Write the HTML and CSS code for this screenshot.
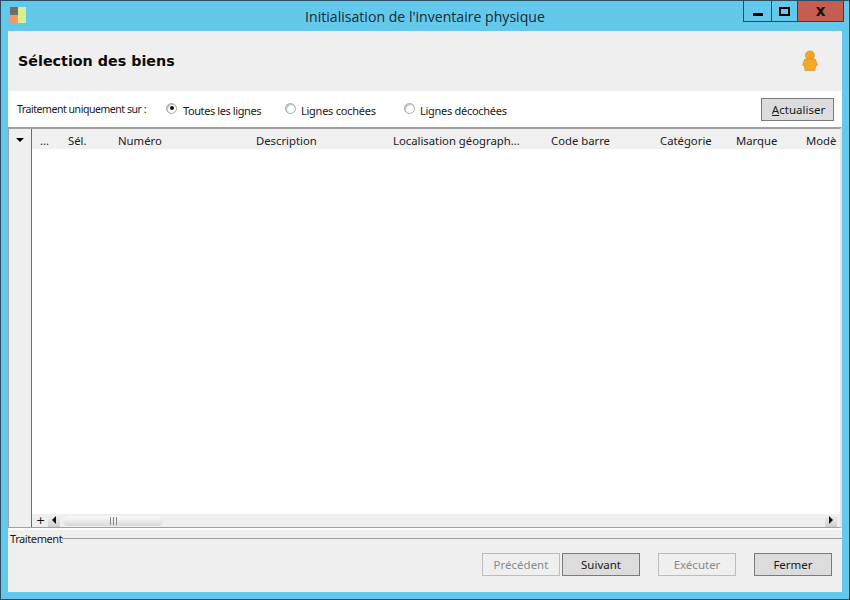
FILE: index.html
```html
<!DOCTYPE html>
<html lang="fr">
<head>
<meta charset="utf-8">
<title>Initialisation de l'inventaire physique</title>
<link rel="stylesheet" href="styles.css">
</head>
<body>
<div class="window">
  <div class="titlebar">
    <div class="app-icon"><svg width="18" height="16" viewBox="0 0 18 16"><rect x="0" y="0" width="8" height="8" fill="#6e6e6e"/><rect x="0" y="8" width="8" height="8" fill="#f59a62"/><rect x="8" y="0" width="8" height="16" fill="#d6f08e"/></svg></div>
    <div class="title">Initialisation de l'inventaire physique</div>
    <div class="win-buttons">
      <div class="wb wb-min"><span class="min-glyph"></span></div>
      <div class="wb wb-max"><span class="max-glyph"></span></div>
      <div class="wb wb-close">x</div>
    </div>
  </div>
  <div class="client">
    <header class="head">
      <h1>Sélection des biens</h1>
      <svg class="person" width="18" height="22" viewBox="0 0 18 22"><circle cx="9" cy="5.500" r="4.600" fill="#f5a623" stroke="#c98a20" stroke-width=".6"/><path d="M3.500 9.500Q9 7.500 14.500 9.500L16.500 15 14.500 16 14 20.500H4L3.500 16 1.500 15z" fill="#f9a825" stroke="#c98a20" stroke-width=".6" stroke-linejoin="round"/></svg>
    </header>
    <div class="filter">
      <span class="filter-label">Traitement uniquement sur :</span>
      <label class="radio r1"><span class="dot on"></span>Toutes les lignes</label>
      <label class="radio r2"><span class="dot"></span>Lignes cochées</label>
      <label class="radio r3"><span class="dot"></span>Lignes décochées</label>
      <button class="btn refresh"><u>A</u>ctualiser</button>
    </div>
    <section class="grid">
      <div class="rail"><span class="rail-arrow"></span></div>
      <div class="main">
        <div class="cols">
          <span class="c-a">...</span><span class="c-b">Sél.</span><span class="c-c">Numéro</span><span class="c-d">Description</span><span class="c-e">Localisation géograph...</span><span class="c-f">Code barre</span><span class="c-g">Catégorie</span><span class="c-h">Marque</span><span class="c-i">Modèle</span>
        </div>
        <div class="rows"></div>
        <div class="footer">
          <span class="plus">+</span>
          <div class="scroll">
            <span class="arrow left"></span>
            <span class="thumb"><span class="grip"></span></span>
            <span class="arrow right"></span>
          </div>
        </div>
      </div>
    </section>
    <section class="group">
      <div class="legend"><span>Traitement</span><i></i></div>
      <div class="actions">
        <button class="btn" disabled>Précédent</button>
        <button class="btn next">Suivant</button>
        <button class="btn exec" disabled>Exécuter</button>
        <button class="btn close">Fermer</button>
      </div>
    </section>
  </div>
</div>
</body>
</html>
```
FILE: styles.css
```css
* { box-sizing: border-box; }
html, body { margin: 0; padding: 0; }
body { width: 850px; height: 600px; overflow: hidden; font-family: "Noto Sans", "Open Sans", sans-serif; font-size: 11.5px; color: #1a1a1a; }
.window { width: 850px; height: 600px; background: #63c9ec; border: 1px solid #2a4f63; display: flex; flex-direction: column; padding: 0 7px 7px; }
.titlebar { height: 30px; flex: none; display: grid; grid-template-columns: 1fr auto 1fr; margin: 0 -7px; }
.app-icon { padding: 6px 0 0 9px; }
.app-icon svg { display: block; }
.title { font-family: "Open Sans", "Noto Sans", sans-serif; font-size: 14.100px; line-height: 31px; color: #1a2a33; }
.win-buttons { display: flex; justify-content: flex-end; align-items: flex-start; padding-right: 5px; }
.wb { height: 21px; border: 1px solid #24465a; border-top: 0; display: flex; align-items: center; justify-content: center; margin-left: -1px; }
.wb-min { width: 29px; }
.wb-max { width: 27px; }
.wb-close { width: 47px; background: #c75c50; font: bold 15px/1 "DejaVu Sans", sans-serif; color: #111; }
.min-glyph { width: 10px; height: 3px; background: #000; margin-top: 6px; }
.max-glyph { width: 11px; height: 9px; border: 2px solid #000; }
.client { flex: 1; min-height: 0; background: #fff; display: flex; flex-direction: column; }
.head { height: 60px; flex: none; background: #efefef; display: flex; align-items: center; justify-content: space-between; padding: 0 23px 0 10px; }
h1 { margin: 0; font: bold 14.300px "DejaVu Sans", sans-serif; color: #0c0c0c; }
.person { display: block; }
.filter { height: 36px; flex: none; display: flex; align-items: center; padding: 0 8px 0 9px; }
.filter-label { width: 149px; font-size: 10.500px; letter-spacing: -0.45px; padding-bottom: 1px; }
.radio { display: flex; align-items: center; font-size: 11px; letter-spacing: -0.4px; padding-top: 2px; }
.r1 { width: 119px; }
.r2 { width: 119px; letter-spacing: -0.25px; }
.r3 { flex: 1; letter-spacing: -0.28px; }
.dot { width: 11px; height: 11px; margin: -4px 5px 0 0; border-radius: 50%; border: 1px solid #a8a8a8; background: #fff; box-shadow: inset 1px 1px 1px #bbb; position: relative; }
.r1 .dot { margin-right: 6px; }
.dot.on::after { content: ""; position: absolute; left: 2.500px; top: 2.500px; width: 4px; height: 4px; border-radius: 50%; background: #111; }
.btn { width: 78px; height: 23px; padding: 0; background: #dcdcdc; border: 1px solid #7a7a7a; font: 11.500px "Noto Sans", sans-serif; color: #1a1a1a; }
.btn:disabled { background: #efefef; border-color: #bcbcbc; color: #8a8a8a; }
.refresh { width: 73px; padding-left: 2px; }
.grid { height: 401px; flex: none; display: flex; border-top: 2px solid #a0a0a0; border-left: 1px solid #a0a0a0; border-bottom: 1px solid #a0a0a0; border-right: 2px solid #e4e4e4; }
.rail { width: 23px; flex: none; background: #efefef; border-right: 1px solid #6d6d6d; padding: 9px 0 0 7px; }
.rail-arrow { display: block; width: 0; height: 0; border: 4.500px solid transparent; border-top: 4px solid #000; border-bottom: 0; }
.main { flex: 1; min-width: 0; display: flex; flex-direction: column; background: #fff; }
.cols { height: 20px; flex: none; background: #f0f0f0; display: flex; align-items: center; padding: 2px 3px 0 8px; white-space: nowrap; font-size: 11.300px; color: #222; }
.cols span { flex: none; }
.cols .c-i { flex: 1; min-width: 0; overflow: hidden; }
.c-a { width: 28px; } .c-b { width: 50px; } .c-c { width: 138px; } .c-d { width: 137px; } .c-e { width: 158px; } .c-f { width: 109px; } .c-g { width: 76px; } .c-h { width: 70px; }
.rows { flex: 1; }
.footer { height: 13px; flex: none; background: #efefef; display: flex; align-items: center; }
.plus { width: 15px; flex: none; text-align: center; font: 11px/13px "DejaVu Sans", sans-serif; color: #111; padding-left: 2px; }
.scroll { flex: 1; height: 13px; display: flex; align-items: center; padding-left: 1px; padding-right: 3px; }
.arrow { width: 12px; height: 13px; flex: none; background: linear-gradient(#f4f4f4, #cfcfcf); position: relative; }
.arrow::after { content: ""; position: absolute; top: 2px; width: 0; height: 0; border-top: 4px solid transparent; border-bottom: 4px solid transparent; }
.arrow.left { margin-right: 3px; }
.arrow.left::after { left: 4px; border-right: 4px solid #111; }
.arrow.right { margin-left: auto; }
.arrow.right::after { left: 4px; border-left: 4px solid #111; }
.thumb { width: 100px; height: 10px; border-radius: 5px; background: linear-gradient(#fbfbfb, #d8d8d8); display: flex; justify-content: center; }
.grip { width: 7px; margin-top: 1px; height: 8px; border-left: 1px solid #888; border-right: 1px solid #888; background: linear-gradient(90deg, transparent 2px, #888 2px, #888 3px, transparent 3px); }
.group { flex: 1; min-height: 0; background: #efefef; border-top: 2px solid #fff; padding-top: 1px; }
.legend { display: flex; align-items: center; height: 14px; font-size: 11px; letter-spacing: -0.4px; padding-left: 2px; }
.legend i { flex: 1; height: 1px; background: #a0a0a0; }
.actions { display: flex; justify-content: flex-end; padding: 8px 10px 0 0; }
.next { margin-left: 2px; }
.exec { margin-left: 18px; }
.close { margin-left: 18px; }
```
